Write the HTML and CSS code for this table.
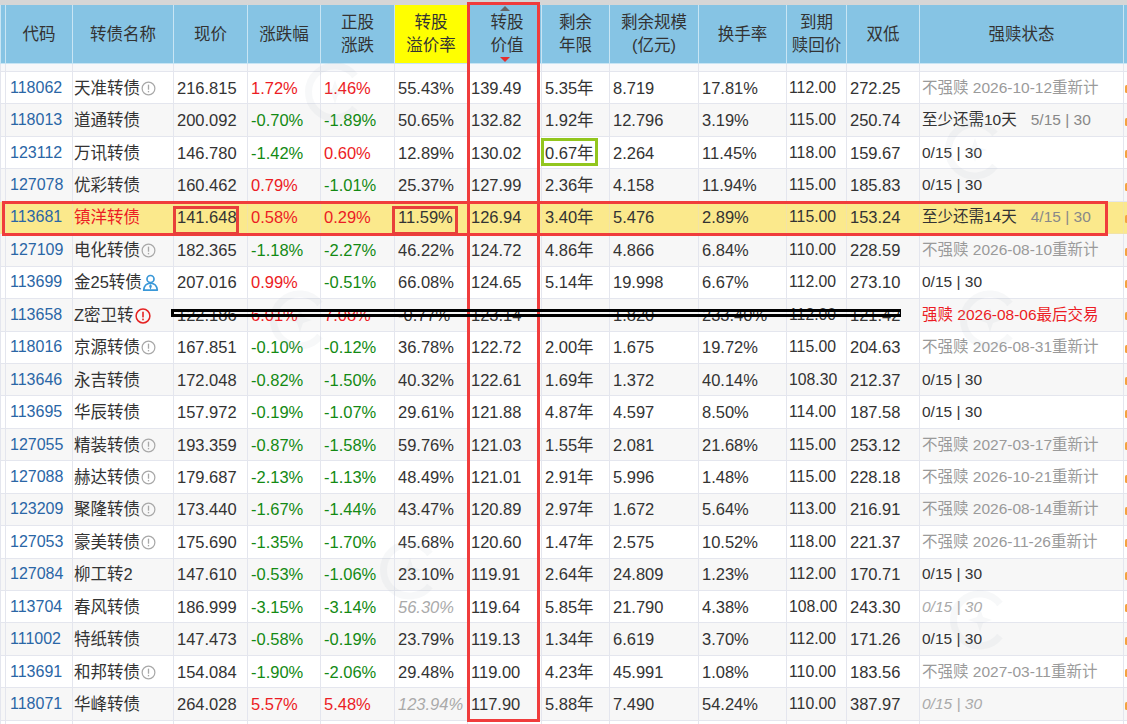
FILE: index.html
```html
<!DOCTYPE html>
<html lang="zh">
<head>
<meta charset="utf-8">
<title>可转债</title>
<link rel="stylesheet" href="styles.css">
</head>
<body>
<div class="page">
  <div class="topband"></div>
  <table class="grid">
    <colgroup>
      <col class="w5"><col class="w67"><col class="w101"><col class="w74"><col class="w73"><col class="w74"><col class="w73"><col class="w74"><col class="w68"><col class="w89"><col class="w88"><col class="w60"><col class="w73"><col class="w204"><col class="w30">
    </colgroup>
    <thead>
      <tr class="head">
        <th></th>
        <th>代码</th>
        <th>转债名称</th>
        <th>现价</th>
        <th>涨跌幅</th>
        <th>正股<br>涨跌</th>
        <th class="yel">转股<br>溢价率</th>
        <th class="sorted"><div class="sortwrap"><span class="arr-up"></span><span>转股<br>价值</span><span class="arr-down"></span></div></th>
        <th>剩余<br>年限</th>
        <th>剩余规模<br>(亿元)</th>
        <th>换手率</th>
        <th>到期<br>赎回价</th>
        <th>双低</th>
        <th>强赎状态</th>
        <th></th>
      </tr>
      <tr class="spacer">
        <td></td><td></td><td></td><td></td><td></td><td></td><td></td><td></td><td></td><td></td><td></td><td></td><td></td><td></td><td></td>
      </tr>
    </thead>
    <tbody>
      <tr>
        <td></td><td class="c">118062</td>
        <td class="n">天准转债<svg class="ico" viewBox="0 0 16 16"><circle cx="8" cy="8" r="6.8" fill="none" stroke="#a8a8a8" stroke-width="1.3"/><rect x="7.3" y="3.9" width="1.4" height="5.4" fill="#a8a8a8"/><rect x="7.3" y="10.6" width="1.4" height="1.5" fill="#a8a8a8"/></svg></td>
        <td>216.815</td><td class="r">1.72%</td><td class="r">1.46%</td><td>55.43%</td><td>139.49</td><td>5.35年</td><td>8.719</td><td>17.81%</td><td class="m">112.00</td><td>272.25</td>
        <td class="s gr">不强赎 2026-10-12重新计</td><td class="dot"><span></span></td>
      </tr>
      <tr class="even">
        <td></td><td class="c">118013</td><td class="n">道通转债</td>
        <td>200.092</td><td class="g">-0.70%</td><td class="g">-1.89%</td><td>50.65%</td><td>132.82</td><td>1.92年</td><td>12.796</td><td>3.19%</td><td class="m">115.00</td><td>250.74</td>
        <td class="s">至少还需10天<span class="cnt">5/15 | 30</span></td><td class="dot"><span></span></td>
      </tr>
      <tr>
        <td></td><td class="c">123112</td><td class="n">万讯转债</td>
        <td>146.780</td><td class="g">-1.42%</td><td class="r">0.60%</td><td>12.89%</td><td>130.02</td><td>0.67年</td><td>2.264</td><td>11.45%</td><td class="m">118.00</td><td>159.67</td>
        <td class="s">0/15 | 30</td><td class="dot"><span></span></td>
      </tr>
      <tr class="even">
        <td></td><td class="c">127078</td><td class="n">优彩转债</td>
        <td>160.462</td><td class="r">0.79%</td><td class="g">-1.01%</td><td>25.37%</td><td>127.99</td><td>2.36年</td><td>4.158</td><td>11.94%</td><td class="m">115.00</td><td>185.83</td>
        <td class="s">0/15 | 30</td><td class="dot"><span></span></td>
      </tr>
      <tr class="hl">
        <td></td><td class="c">113681</td><td class="n r">镇洋转债</td>
        <td>141.648</td><td class="r">0.58%</td><td class="r">0.29%</td><td>11.59%</td><td>126.94</td><td>3.40年</td><td>5.476</td><td>2.89%</td><td class="m">115.00</td><td>153.24</td>
        <td class="s">至少还需14天<span class="cnt">4/15 | 30</span></td><td class="dot"><span></span></td>
      </tr>
      <tr class="even">
        <td></td><td class="c">127109</td>
        <td class="n">电化转债<svg class="ico" viewBox="0 0 16 16"><circle cx="8" cy="8" r="6.8" fill="none" stroke="#a8a8a8" stroke-width="1.3"/><rect x="7.3" y="3.9" width="1.4" height="5.4" fill="#a8a8a8"/><rect x="7.3" y="10.6" width="1.4" height="1.5" fill="#a8a8a8"/></svg></td>
        <td>182.365</td><td class="g">-1.18%</td><td class="g">-2.27%</td><td>46.22%</td><td>124.72</td><td>4.86年</td><td>4.866</td><td>6.84%</td><td class="m">110.00</td><td>228.59</td>
        <td class="s gr">不强赎 2026-08-10重新计</td><td class="dot"><span></span></td>
      </tr>
      <tr>
        <td></td><td class="c">113699</td>
        <td class="n">金25转债<svg class="ico ico-user" viewBox="0 0 16 16"><circle cx="8" cy="4.7" r="3.3" fill="none" stroke="#3a98d8" stroke-width="1.6"/><path d="M1.6 15.2 C2 10.7 4.5 8.7 8 8.7 C11.5 8.7 14 10.7 14.4 15.2 Z" fill="none" stroke="#3a98d8" stroke-width="1.6" stroke-linejoin="round"/><path d="M8 9.4 L6.7 11.2 L8 15 L9.3 11.2 Z" fill="#3a98d8"/></svg></td>
        <td>207.016</td><td class="r">0.99%</td><td class="g">-0.51%</td><td>66.08%</td><td>124.65</td><td>5.14年</td><td>19.998</td><td>6.67%</td><td class="m">112.00</td><td>273.10</td>
        <td class="s">0/15 | 30</td><td class="dot"><span></span></td>
      </tr>
      <tr class="even">
        <td></td><td class="c">113658</td>
        <td class="n">Z密卫转<svg class="ico ico-red" viewBox="0 0 16 16"><circle cx="8" cy="8" r="6.9" fill="none" stroke="#e52222" stroke-width="1.5"/><rect x="7.2" y="3.7" width="1.6" height="5.7" fill="#e52222"/><rect x="7.2" y="10.6" width="1.6" height="1.7" fill="#e52222"/></svg></td>
        <td>122.186</td><td class="r">6.01%</td><td class="r">7.08%</td><td>-0.77%</td><td>123.14</td><td></td><td>1.820</td><td>233.40%</td><td class="m">112.00</td><td>121.42</td>
        <td class="s r">强赎 2026-08-06最后交易</td><td class="dot"><span></span></td>
      </tr>
      <tr>
        <td></td><td class="c">118016</td>
        <td class="n">京源转债<svg class="ico" viewBox="0 0 16 16"><circle cx="8" cy="8" r="6.8" fill="none" stroke="#a8a8a8" stroke-width="1.3"/><rect x="7.3" y="3.9" width="1.4" height="5.4" fill="#a8a8a8"/><rect x="7.3" y="10.6" width="1.4" height="1.5" fill="#a8a8a8"/></svg></td>
        <td>167.851</td><td class="g">-0.10%</td><td class="g">-0.12%</td><td>36.78%</td><td>122.72</td><td>2.00年</td><td>1.675</td><td>19.72%</td><td class="m">115.00</td><td>204.63</td>
        <td class="s gr">不强赎 2026-08-31重新计</td><td class="dot"><span></span></td>
      </tr>
      <tr class="even">
        <td></td><td class="c">113646</td><td class="n">永吉转债</td>
        <td>172.048</td><td class="g">-0.82%</td><td class="g">-1.50%</td><td>40.32%</td><td>122.61</td><td>1.69年</td><td>1.372</td><td>40.14%</td><td class="m">108.30</td><td>212.37</td>
        <td class="s">0/15 | 30</td><td class="dot"><span></span></td>
      </tr>
      <tr>
        <td></td><td class="c">113695</td><td class="n">华辰转债</td>
        <td>157.972</td><td class="g">-0.19%</td><td class="g">-1.07%</td><td>29.61%</td><td>121.88</td><td>4.87年</td><td>4.597</td><td>8.50%</td><td class="m">114.00</td><td>187.58</td>
        <td class="s">0/15 | 30</td><td class="dot"><span></span></td>
      </tr>
      <tr class="even">
        <td></td><td class="c">127055</td>
        <td class="n">精装转债<svg class="ico" viewBox="0 0 16 16"><circle cx="8" cy="8" r="6.8" fill="none" stroke="#a8a8a8" stroke-width="1.3"/><rect x="7.3" y="3.9" width="1.4" height="5.4" fill="#a8a8a8"/><rect x="7.3" y="10.6" width="1.4" height="1.5" fill="#a8a8a8"/></svg></td>
        <td>193.359</td><td class="g">-0.87%</td><td class="g">-1.58%</td><td>59.76%</td><td>121.03</td><td>1.55年</td><td>2.081</td><td>21.68%</td><td class="m">115.00</td><td>253.12</td>
        <td class="s gr">不强赎 2027-03-17重新计</td><td class="dot"><span></span></td>
      </tr>
      <tr>
        <td></td><td class="c">127088</td>
        <td class="n">赫达转债<svg class="ico" viewBox="0 0 16 16"><circle cx="8" cy="8" r="6.8" fill="none" stroke="#a8a8a8" stroke-width="1.3"/><rect x="7.3" y="3.9" width="1.4" height="5.4" fill="#a8a8a8"/><rect x="7.3" y="10.6" width="1.4" height="1.5" fill="#a8a8a8"/></svg></td>
        <td>179.687</td><td class="g">-2.13%</td><td class="g">-1.13%</td><td>48.49%</td><td>121.01</td><td>2.91年</td><td>5.996</td><td>1.48%</td><td class="m">115.00</td><td>228.18</td>
        <td class="s gr">不强赎 2026-10-21重新计</td><td class="dot"><span></span></td>
      </tr>
      <tr class="even">
        <td></td><td class="c">123209</td>
        <td class="n">聚隆转债<svg class="ico" viewBox="0 0 16 16"><circle cx="8" cy="8" r="6.8" fill="none" stroke="#a8a8a8" stroke-width="1.3"/><rect x="7.3" y="3.9" width="1.4" height="5.4" fill="#a8a8a8"/><rect x="7.3" y="10.6" width="1.4" height="1.5" fill="#a8a8a8"/></svg></td>
        <td>173.440</td><td class="g">-1.67%</td><td class="g">-1.44%</td><td>43.47%</td><td>120.89</td><td>2.97年</td><td>1.672</td><td>5.64%</td><td class="m">113.00</td><td>216.91</td>
        <td class="s gr">不强赎 2026-08-14重新计</td><td class="dot"><span></span></td>
      </tr>
      <tr>
        <td></td><td class="c">127053</td>
        <td class="n">豪美转债<svg class="ico" viewBox="0 0 16 16"><circle cx="8" cy="8" r="6.8" fill="none" stroke="#a8a8a8" stroke-width="1.3"/><rect x="7.3" y="3.9" width="1.4" height="5.4" fill="#a8a8a8"/><rect x="7.3" y="10.6" width="1.4" height="1.5" fill="#a8a8a8"/></svg></td>
        <td>175.690</td><td class="g">-1.35%</td><td class="g">-1.70%</td><td>45.68%</td><td>120.60</td><td>1.47年</td><td>2.575</td><td>10.52%</td><td class="m">118.00</td><td>221.37</td>
        <td class="s gr">不强赎 2026-11-26重新计</td><td class="dot"><span></span></td>
      </tr>
      <tr class="even">
        <td></td><td class="c">127084</td><td class="n">柳工转2</td>
        <td>147.610</td><td class="g">-0.53%</td><td class="g">-1.06%</td><td>23.10%</td><td>119.91</td><td>2.64年</td><td>24.809</td><td>1.23%</td><td class="m">112.00</td><td>170.71</td>
        <td class="s">0/15 | 30</td><td class="dot"><span></span></td>
      </tr>
      <tr>
        <td></td><td class="c">113704</td><td class="n">春风转债</td>
        <td>186.999</td><td class="g">-3.15%</td><td class="g">-3.14%</td><td class="it">56.30%</td><td>119.64</td><td>5.85年</td><td>21.790</td><td>4.38%</td><td class="m">108.00</td><td>243.30</td>
        <td class="s it">0/15 | 30</td><td class="dot"><span></span></td>
      </tr>
      <tr class="even">
        <td></td><td class="c">111002</td><td class="n">特纸转债</td>
        <td>147.473</td><td class="g">-0.58%</td><td class="g">-0.19%</td><td>23.79%</td><td>119.13</td><td>1.34年</td><td>6.619</td><td>3.70%</td><td class="m">112.00</td><td>171.26</td>
        <td class="s">0/15 | 30</td><td class="dot"><span></span></td>
      </tr>
      <tr>
        <td></td><td class="c">113691</td>
        <td class="n">和邦转债<svg class="ico" viewBox="0 0 16 16"><circle cx="8" cy="8" r="6.8" fill="none" stroke="#a8a8a8" stroke-width="1.3"/><rect x="7.3" y="3.9" width="1.4" height="5.4" fill="#a8a8a8"/><rect x="7.3" y="10.6" width="1.4" height="1.5" fill="#a8a8a8"/></svg></td>
        <td>154.084</td><td class="g">-1.90%</td><td class="g">-2.06%</td><td>29.48%</td><td>119.00</td><td>4.23年</td><td>45.991</td><td>1.08%</td><td class="m">110.00</td><td>183.56</td>
        <td class="s gr">不强赎 2027-03-11重新计</td><td class="dot"><span></span></td>
      </tr>
      <tr class="even">
        <td></td><td class="c">118071</td><td class="n">华峰转债</td>
        <td>264.028</td><td class="r">5.57%</td><td class="r">5.48%</td><td class="it">123.94%</td><td>117.90</td><td>5.88年</td><td>7.490</td><td>54.24%</td><td class="m">110.00</td><td>387.97</td>
        <td class="s it">0/15 | 30</td><td class="dot"><span></span></td>
      </tr>
      <tr>
        <td></td><td class="c"></td><td></td><td></td><td></td><td></td><td></td><td></td><td></td><td></td><td></td><td></td><td></td><td></td><td class="dot"><span></span></td>
      </tr>
    </tbody>
  </table>

  <svg class="wm wm1" viewBox="0 0 60 60"><path d="M50 14 A26 26 0 1 0 50 46" fill="none" stroke="currentColor" stroke-width="7"/><path d="M30 18 L33 27 L42 30 L33 33 L30 42 L27 33 L18 30 L27 27 Z" fill="currentColor"/></svg>
  <svg class="wm wm2" viewBox="0 0 60 60"><path d="M50 14 A26 26 0 1 0 50 46" fill="none" stroke="currentColor" stroke-width="7"/><path d="M30 18 L33 27 L42 30 L33 33 L30 42 L27 33 L18 30 L27 27 Z" fill="currentColor"/></svg>
  <svg class="wm wm3" viewBox="0 0 60 60"><path d="M50 14 A26 26 0 1 0 50 46" fill="none" stroke="currentColor" stroke-width="7"/><path d="M30 18 L33 27 L42 30 L33 33 L30 42 L27 33 L18 30 L27 27 Z" fill="currentColor"/></svg>
  <svg class="wm wm4" viewBox="0 0 60 60"><path d="M50 14 A26 26 0 1 0 50 46" fill="none" stroke="currentColor" stroke-width="7"/><path d="M30 18 L33 27 L42 30 L33 33 L30 42 L27 33 L18 30 L27 27 Z" fill="currentColor"/></svg>
  <svg class="wm wm5" viewBox="0 0 60 60"><path d="M50 14 A26 26 0 1 0 50 46" fill="none" stroke="currentColor" stroke-width="7"/><path d="M30 18 L33 27 L42 30 L33 33 L30 42 L27 33 L18 30 L27 27 Z" fill="currentColor"/></svg>
  <svg class="wm wm6" viewBox="0 0 60 60"><path d="M50 14 A26 26 0 1 0 50 46" fill="none" stroke="currentColor" stroke-width="7"/><path d="M30 18 L33 27 L42 30 L33 33 L30 42 L27 33 L18 30 L27 27 Z" fill="currentColor"/></svg>

  <div class="mark col-box"></div>
  <div class="mark row-box"></div>
  <div class="mark price-box"></div>
  <div class="mark prem-box"></div>
  <div class="mark year-box"></div>
  <div class="mark strike"></div>
</div>
</body>
</html>
```

FILE: styles.css
```css
* { box-sizing: border-box; }
html, body { margin: 0; padding: 0; background: #fff; }
body {
  font-family: "Liberation Sans", "Noto Sans CJK SC", sans-serif;
  font-size: 16.5px;
  color: #333;
}
.page {
  position: relative;
  width: 1127px;
  height: 724px;
  overflow: hidden;
}
.topband { height: 5px; background: #d6d6d6; }

.grid {
  border-collapse: collapse;
  table-layout: fixed;
  width: 1153px;
}
.w5 { width: 5px; } .w67 { width: 67px; } .w101 { width: 101px; }
.w74 { width: 74px; } .w73 { width: 73px; } .w68 { width: 68px; }
.w89 { width: 89px; } .w88 { width: 88px; } .w60 { width: 60px; }
.w204 { width: 204px; } .w30 { width: 30px; }

.head { height: 58px; }
.head th {
  background: #86c4e4;
  border: 1px solid #c8e5f4;
  border-top: none;
  font-weight: normal;
  color: #333;
  line-height: 23px;
  text-align: center;
  vertical-align: middle;
  padding: 0;
  white-space: nowrap;
}
.head th.yel { background: #ffff00; }
.sortwrap {
  display: flex;
  flex-direction: column;
  align-items: center;
  justify-content: space-between;
  height: 58px;
  padding: 1px 0 1px;
}
.sortwrap > span:nth-child(2) { padding-left: 5px; }
.arr-up {
  width: 0; height: 0;
  border-left: 5px solid transparent;
  border-right: 5px solid transparent;
  border-bottom: 5px solid #666;
}
.arr-down {
  width: 0; height: 0;
  border-left: 5px solid transparent;
  border-right: 5px solid transparent;
  border-top: 5px solid #e52e2e;
}

.spacer { height: 8px; }
.spacer td {
  background: #f7f8fa;
  border-left: 1px solid #e4e6ee;
  border-right: 1px solid #e4e6ee;
  border-bottom: 1px solid #e4e6ee;
  padding: 0;
}

tbody tr { height: 32.45px; background: #fff; }
tbody tr.even { background: #f7f7f7; }
tbody tr.hl { background: #fbe98c; }
tbody td {
  border: 1px solid #e4e6ee;
  padding: 0 0 0 3px;
  white-space: nowrap;
  overflow: hidden;
  vertical-align: middle;
  line-height: 20px;
}
tbody tr.hl td { border-color: #f2e3a6; }
tbody td:first-child { padding: 0; }
td.c { color: #2a66a6; padding-left: 4px; font-size: 16px; }
td.n { padding-left: 1px; }
td.m { font-size: 15.8px; padding-left: 2px; }
td.s { font-size: 15.5px; padding-left: 2px; }
td.r { color: #ec1c24; }
td.g { color: #138a13; }
td.gr { color: #9a9a9a; }
td.it { color: #aaa; font-style: italic; }
.cnt { color: #888; margin-left: 14px; }

.ico {
  width: 15px; height: 15px;
  vertical-align: -2px;
  margin-left: 1px;
}
.ico-red { width: 16px; height: 16px; vertical-align: -3px; }
.ico-user { width: 17px; height: 17px; vertical-align: -3px; margin-left: 0; }

td.dot { padding-left: 1px; }
td.dot span {
  display: inline-block;
  width: 3px; height: 8px;
  border-radius: 2px;
  background: #f4a340;
  vertical-align: middle;
}

/* faint watermark logos */
.wm {
  position: absolute;
  width: 60px; height: 60px;
  color: rgba(170, 175, 190, 0.09);
  pointer-events: none;
}
.wm1 { left: 305px; top: 62px; }
.wm2 { left: 945px; top: 120px; }
.wm3 { left: 270px; top: 290px; }
.wm4 { left: 960px; top: 290px; }
.wm5 { left: 380px; top: 540px; }
.wm6 { left: 950px; top: 590px; }

/* annotations drawn over the table */
.mark { position: absolute; pointer-events: none; }
.col-box {
  left: 467px; top: 2px;
  width: 73px; height: 720px;
  border: 3px solid #f03c3c;
}
.row-box {
  left: 2px; top: 201px;
  width: 1106px; height: 35px;
  border: 3px solid #f03c3c;
}
.price-box {
  left: 173px; top: 206px;
  width: 66px; height: 29px;
  border: 3px solid #e8403a;
}
.prem-box {
  left: 392px; top: 206px;
  width: 66px; height: 29px;
  border: 3px solid #e8403a;
}
.year-box {
  left: 541px; top: 138px;
  width: 57px; height: 28px;
  border: 3px solid #92c61e;
}
.strike {
  left: 171px; top: 309px;
  width: 730px; height: 8px;
  border: 3px solid #000;
  border-right-width: 1px;
}
```
